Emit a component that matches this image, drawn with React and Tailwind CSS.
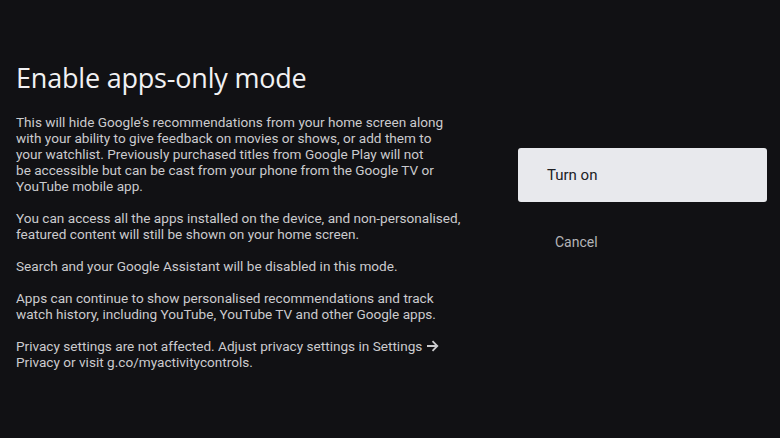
export default function App() {
  const paragraphs = [
    "You can access all the apps installed on the device, and non-personalised, featured content will still be shown on your home screen.",
    "Search and your Google Assistant will be disabled in this mode.",
    "Apps can continue to show personalised recommendations and track watch history, including YouTube, YouTube TV and other Google apps.",
  ];

  return (
    <div className="w-[780px] h-[438px] bg-[#111114] flex font-['Roboto',sans-serif] overflow-hidden">
      {/* Texto principal */}
      <div className="w-[470px] pl-4 pt-[61px]">
        <h1 className="font-['Open_Sans',sans-serif] text-[27px] leading-[34px] text-[#f1f1f3] tracking-[-0.2px]">
          Enable apps-only mode
        </h1>
        <div className="mt-[19px] flex flex-col gap-4 w-[450px]">
          <p className="text-[13.6px] leading-[16px] text-[#cbcbce]">
            This will hide Google’s recommendations from your home screen along with your ability to give feedback on
            movies or shows, or add them to
            <br />
            your watchlist. Previously purchased titles from Google Play will not
            <br />
            be accessible but can be cast from your phone from the Google TV or YouTube mobile app.
          </p>
          {paragraphs.map((p, i) => (
            <p key={i} className="text-[13.6px] leading-[16px] text-[#cbcbce]">
              {p}
            </p>
          ))}
          <p className="text-[13.6px] leading-[16px] text-[#cbcbce]">
            Privacy settings are not affected. Adjust privacy settings in Settings{" "}
            <svg className="inline-block w-[13px] h-[12px] align-[-1px]" viewBox="0 0 13 12" fill="none" stroke="#cbcbce" strokeWidth="1.8">
              <path d="M1 6h10.5M6.5 1.2 11.3 6l-4.8 4.8" />
            </svg>{" "}
            Privacy or visit g.co/myactivitycontrols.
          </p>
        </div>
      </div>

      {/* Acciones */}
      <div className="flex-1 pt-[148px] pl-[48px] pr-[13px]">
        <button className="w-full h-[54px] bg-[#e8e9ed] rounded-[3px] text-left pl-[29px] text-[15px] text-[#202124]">
          Turn on
        </button>
        <button className="w-full h-[54px] text-left pl-[37px] mt-[13px] text-[14px] text-[#b5b5b8]">
          Cancel
        </button>
      </div>
    </div>
  );
}
